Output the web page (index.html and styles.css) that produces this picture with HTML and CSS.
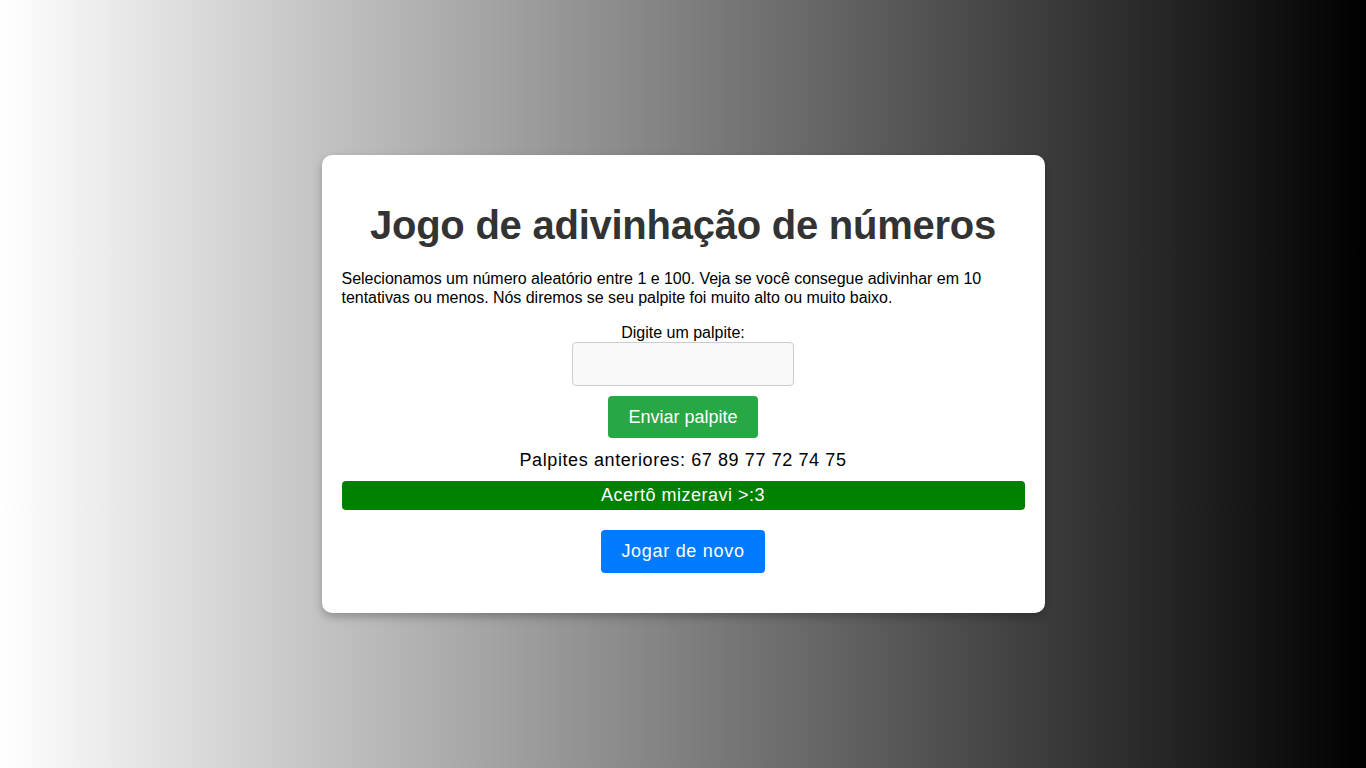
FILE: index.html
```html
<!DOCTYPE html>
<html lang="pt-BR">
<head>
<meta charset="utf-8">
<title>Jogo de adivinhação de números</title>
<link rel="stylesheet" href="styles.css">
</head>
<body>
<main class="card">
  <h1 class="title">Jogo de adivinhação de números</h1>
  <p class="intro">Selecionamos um número aleatório entre 1 e 100. Veja se você consegue adivinhar em 10 tentativas ou menos. Nós diremos se seu palpite foi muito alto ou muito baixo.</p>
  <div class="form">
    <label class="label" for="guess">Digite um palpite:</label>
    <input class="field" id="guess" type="text">
    <button class="btn btn-green" type="button">Enviar palpite</button>
  </div>
  <p class="guesses">Palpites anteriores: 67 89 77 72 74 75</p>
  <p class="result">Acertô mizeravi &gt;:3</p>
  <div class="again">
    <button class="btn btn-blue" type="button">Jogar de novo</button>
  </div>
</main>
</body>
</html>
```
FILE: styles.css
```css
html, body {
  margin: 0;
  height: 100%;
}
body {
  font-family: "Liberation Sans", Arial, sans-serif;
  background: linear-gradient(to right, #ffffff, #000000);
  display: flex;
  align-items: center;
  justify-content: center;
}
.card {
  width: 50%;
  padding: 20px;
  background: #fff;
  border-radius: 10px;
  box-shadow: 0 4px 8px rgba(0, 0, 0, 0.25);
}
.title {
  margin: 27px 0 21px;
  font-size: 40px;
  line-height: 46px;
  letter-spacing: -0.25px;
  color: #333;
  text-align: center;
}
.intro {
  margin: 0 0 17px;
  font-size: 16px;
  line-height: 19px;
  letter-spacing: -0.03px;
  color: #000;
}
.form {
  display: flex;
  flex-direction: column;
  align-items: center;
}
.label {
  font-size: 16px;
  line-height: 18px;
}
.field {
  width: 222px;
  height: 44px;
  box-sizing: border-box;
  border: 1px solid #ccc;
  border-radius: 4px;
  background: #f9f9f9;
  margin: 0 0 10px;
  font-size: 16px;
}
.btn {
  border: none;
  border-radius: 4px;
  color: #fff;
  font-family: "Liberation Sans", Arial, sans-serif;
  font-size: 18px;
  padding: 0 20px;
  height: 42px;
}
.btn-green { background: #28a745; }
.btn-blue {
  background: #007bff;
  height: 43px;
  letter-spacing: 0.7px;
}
.guesses {
  margin: 11px 0 0;
  text-align: center;
  font-size: 18px;
  line-height: 23px;
  letter-spacing: 0.6px;
}
.result {
  margin: 9px 0 0;
  background: #008000;
  color: #fff;
  border-radius: 4px;
  text-align: center;
  font-size: 18px;
  line-height: 29px;
  letter-spacing: 0.5px;
}
.again {
  display: flex;
  justify-content: center;
  margin: 20px 0 20px;
}
```
